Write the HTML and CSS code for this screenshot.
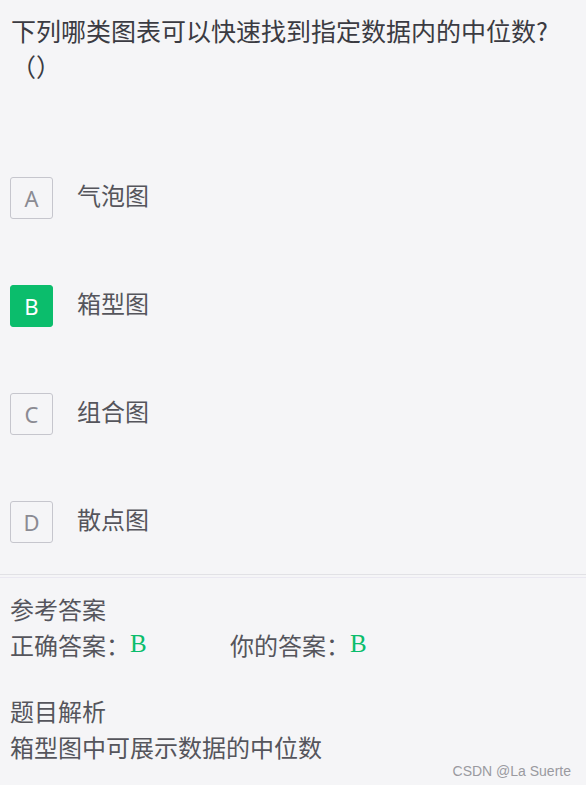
FILE: index.html
```html
<!DOCTYPE html>
<html lang="zh-CN">
<head>
<meta charset="utf-8">
<title>题目</title>
<link rel="stylesheet" href="styles.css">
</head>
<body>
<div class="page">
  <div class="question">下列哪类图表可以快速找到指定数据内的中位数?（）</div>
  <div class="options">
    <div class="option"><span class="key">A</span><span class="label">气泡图</span></div>
    <div class="option"><span class="key key-on">B</span><span class="label">箱型图</span></div>
    <div class="option"><span class="key">C</span><span class="label">组合图</span></div>
    <div class="option"><span class="key">D</span><span class="label">散点图</span></div>
  </div>
  <div class="divider"></div>
  <div class="answer">
    <div class="sec-title">参考答案</div>
    <div class="ans-row">
      <span class="ans-item ans-first">正确答案：<span class="ans-val">B</span></span>
      <span class="ans-item">你的答案：<span class="ans-val">B</span></span>
    </div>
    <div class="sec-title sec-gap">题目解析</div>
    <div class="sec-text">箱型图中可展示数据的中位数</div>
  </div>
  <div class="watermark">CSDN @La Suerte</div>
</div>
</body>
</html>
```

FILE: styles.css
```css
html, body {
  margin: 0;
  padding: 0;
  background: #f5f5f7;
}
.page {
  position: relative;
  width: 586px;
  height: 785px;
  overflow: hidden;
  font-family: "Noto Sans CJK SC", "Noto Sans", sans-serif;
}
.question {
  padding: 12px 10px 0 11px;
  width: 560px;
  font-size: 25px;
  line-height: 36px;
  color: #3b3b42;
}
.options {
  display: flex;
  flex-direction: column;
  gap: 66px;
  padding: 0 10px;
  margin-top: 93px;
}
.option {
  display: flex;
  align-items: center;
  gap: 24px;
  height: 42px;
}
.key {
  box-sizing: border-box;
  width: 43px;
  height: 42px;
  border: 1px solid #c6c6cd;
  border-radius: 3px;
  display: flex;
  align-items: center;
  justify-content: center;
  font-family: "Noto Sans", sans-serif;
  font-size: 22px;
  color: #8b8b93;
}
.key-on {
  background: #0bbd6c;
  border-color: #0bbd6c;
  color: #ffffff;
}
.label {
  font-size: 24px;
  line-height: 36px;
  color: #55555c;
  margin-top: -7px;
}
.divider {
  margin-top: 31px;
  height: 2px;
  border-top: 1px solid #e1e1e5;
  border-bottom: 1px solid #eae8f1;
}
.answer {
  padding: 0 10px;
  color: #55555c;
  font-size: 24px;
  line-height: 36px;
}
.sec-title {
  margin-top: 13px;
}
.ans-row {
  display: flex;
}
.ans-first {
  width: 220px;
}
.ans-val {
  font-family: "Liberation Serif", serif;
  font-size: 25px;
  color: #0bbd6c;
  position: relative;
  top: -3px;
}
.sec-gap {
  margin-top: 28px;
}
.sec-text {
  color: #55555c;
}
.watermark {
  position: absolute;
  right: 15px;
  bottom: 6px;
  font-family: "Liberation Sans", sans-serif;
  font-size: 14px;
  color: #9a9aa0;
}
```
